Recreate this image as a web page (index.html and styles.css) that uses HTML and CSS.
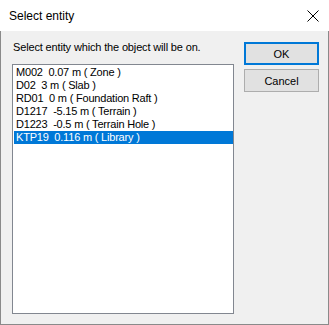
FILE: index.html
```html
<!DOCTYPE html>
<html lang="en">
<head>
    <meta charset="UTF-8">
    <meta name="viewport" content="width=device-width, initial-scale=1.0">
    <title>Select entity</title>
    <link rel="stylesheet" href="styles.css">
</head>
<body>
    <div class="window">
        <div class="titlebar">
            <span class="title">Select entity</span>
            <svg class="close" width="12" height="12" viewBox="0 0 12 12">
                <path d="M0.5 0.5 L11.5 11.5 M11.5 0.5 L0.5 11.5" stroke="#000" stroke-width="1" fill="none"/>
            </svg>
        </div>
        <div class="content">
            <div class="left">
                <div class="prompt">Select entity which the object will be on.</div>
                <div class="listbox">
                    <div class="item">M002  0.07 m ( Zone )</div>
                    <div class="item">D02  3 m ( Slab )</div>
                    <div class="item">RD01  0 m ( Foundation Raft )</div>
                    <div class="item">D1217  -5.15 m ( Terrain )</div>
                    <div class="item">D1223  -0.5 m ( Terrain Hole )</div>
                    <div class="item selected">KTP19  0.116 m ( Library )</div>
                </div>
            </div>
            <div class="buttons">
                <button class="btn default">OK</button>
                <button class="btn">Cancel</button>
            </div>
        </div>
    </div>
</body>
</html>
```

FILE: styles.css
```css
body {
    margin: 0;
    font-family: "Liberation Sans", Arial, sans-serif;
    background: #f0f0f0;
}
.window {
    width: 329px;
    height: 325px;
    display: flex;
    flex-direction: column;
}
.titlebar {
    height: 31px;
    background: #ffffff;
    display: flex;
    align-items: center;
    justify-content: space-between;
    padding: 0 10px 0 9px;
}
.title {
    font-size: 12px;
    color: #000;
    padding-top: 1px;
}
.close {
    display: block;
    margin-top: 1px;
}
.content {
    flex: 1;
    background: #f0f0f0;
    border: 1px solid #8a8a8a;
    border-top: none;
    display: flex;
    gap: 10px;
    padding: 10px 0 0 11px;
}
.left {
    width: 222px;
}
.prompt {
    font-size: 11px;
    line-height: 13px;
    letter-spacing: -0.15px;
    color: #000;
    padding-left: 1px;
    margin-bottom: 10px;
}
.listbox {
    height: 247px;
    background: #ffffff;
    border: 1px solid #828790;
    padding: 1px 0 0 1px;
}
.item {
    height: 13px;
    line-height: 13px;
    font-size: 11px;
    letter-spacing: -0.2px;
    padding-left: 2px;
    white-space: pre;
    color: #000;
}
.item.selected {
    background: #0078d7;
    color: #ffffff;
}
.buttons {
    display: flex;
    flex-direction: column;
    gap: 4px;
    padding-top: 1px;
}
.btn {
    width: 75px;
    height: 23px;
    font-family: "Liberation Sans", Arial, sans-serif;
    font-size: 11px;
    color: #000;
    background: #e1e1e1;
    border: 1px solid #adadad;
    padding: 0;
}
.btn.default {
    border: 2px solid #0078d7;
}
```
